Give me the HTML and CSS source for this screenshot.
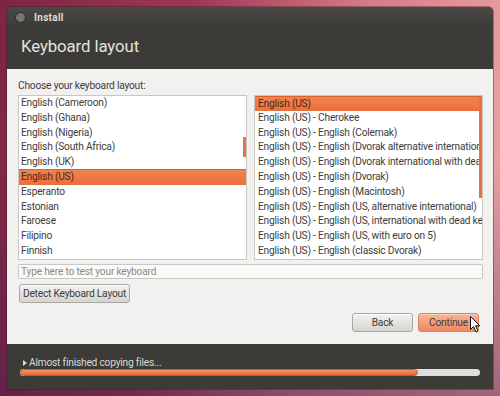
FILE: index.html
```html
<!DOCTYPE HTML>
<html lang="en">
<head>
  <meta charset="UTF-8">
  <title>Install</title>
  <link rel="stylesheet" href="styles.css">
</head>
<body>
  <div class="window">
    <!-- Title bar -->
    <div class="titlebar">
      <span class="close-btn"></span>
      <span class="title">Install</span>
    </div>
    <div class="header">
      <h1>Keyboard layout</h1>
    </div>
    <!-- Page content -->
    <div class="content">
      <p class="label">Choose your keyboard layout:</p>
      <div class="lists">
        <ul class="list list-left">
          <li>English (Cameroon)</li>
          <li>English (Ghana)</li>
          <li>English (Nigeria)</li>
          <li>English (South Africa)</li>
          <li>English (UK)</li>
          <li class="selected">English (US)</li>
          <li>Esperanto</li>
          <li>Estonian</li>
          <li>Faroese</li>
          <li>Filipino</li>
          <li>Finnish</li>
          <span class="scroll-ind left-ind"></span>
        </ul>
        <ul class="list list-right">
          <li class="selected">English (US)</li>
          <li>English (US) - Cherokee</li>
          <li>English (US) - English (Colemak)</li>
          <li>English (US) - English (Dvorak alternative international no dead keys)</li>
          <li>English (US) - English (Dvorak international with dead keys)</li>
          <li>English (US) - English (Dvorak)</li>
          <li>English (US) - English (Macintosh)</li>
          <li>English (US) - English (US, alternative international)</li>
          <li>English (US) - English (US, international with dead keys)</li>
          <li>English (US) - English (US, with euro on 5)</li>
          <li>English (US) - English (classic Dvorak)</li>
          <span class="scroll-ind right-ind"></span>
        </ul>
      </div>
      <input class="test-input" type="text" placeholder="Type here to test your keyboard">
      <button class="btn detect">Detect Keyboard Layout</button>
      <div class="actions">
        <button class="btn">Back</button>
        <button class="btn primary">Continue
          <svg class="cursor" width="11" height="17" viewBox="0 0 11 17">
            <path d="M0.5 0.5 L0.5 13.5 L3.5 10.5 L6 16 L8 15 L5.6 9.8 L9.8 9.8 Z" fill="#fff" stroke="#111" stroke-width="1"/>
          </svg>
        </button>
      </div>
    </div>
    <!-- Progress footer -->
    <div class="footer">
      <div class="status"><span class="arrow"></span>Almost finished copying files...</div>
      <div class="progress"><div class="progress-fill" style="width: 86.5%"></div></div>
    </div>
  </div>
</body>
</html>
```

FILE: styles.css
```css
body {
  margin: 0;
  padding: 0;
  width: 500px;
  height: 396px;
  overflow: hidden;
  font-family: Roboto, 'Noto Sans', sans-serif;
  letter-spacing: -0.2px;
  background: linear-gradient(100deg, #7e2444 0%, #9c3a55 35%, #d67c86 65%, #eeaaa8 100%);
  position: relative;
}
body::after {
  content: "";
  position: absolute;
  inset: 0;
  background: linear-gradient(180deg, rgba(0, 0, 0, 0) 40%, rgba(60, 20, 70, 0.45) 100%);
  pointer-events: none;
}
.window {
  position: relative;
  z-index: 1;
  margin: 7px 0 0 7px;
  width: 486px;
  height: 382px;
  display: flex;
  flex-direction: column;
  background: #3c3b37;
  border-radius: 5px 5px 0 0;
  box-shadow: 0 0 0 1px rgba(40, 20, 30, 0.35);
  overflow: hidden;
}
.titlebar {
  height: 20px;
  display: flex;
  align-items: center;
  padding-left: 8px;
  background: linear-gradient(#4a4945, #3c3b37);
}
.close-btn {
  width: 9px;
  height: 9px;
  border-radius: 50%;
  background: #77766f;
  border: 1px solid #2b2a27;
  margin-right: 8px;
}
.title {
  color: #dfdbd2;
  font-size: 10px;
  font-weight: bold;
  letter-spacing: 0.3px;
}
.header {
  height: 42px;
  padding-left: 14px;
}
.header h1 {
  margin: 0;
  padding-top: 9px;
  font-weight: normal;
  font-size: 16.8px;
  color: #e4e2de;
  letter-spacing: -0.1px;
}
.content {
  height: 275px;
  background: #f2f1f0;
  padding: 10px 10px 0 11px;
  box-sizing: border-box;
  display: flex;
  flex-direction: column;
}
.label {
  margin: 0 0 2px 0;
  font-size: 10.2px;
  line-height: 14px;
  color: #3c3c3c;
}
.lists {
  display: grid;
  grid-template-columns: 229px 229px;
  column-gap: 7px;
  height: 165px;
}
.list {
  position: relative;
  margin: 0;
  padding: 0;
  list-style: none;
  background: #fff;
  border: 1px solid #c9c7c2;
  overflow: hidden;
}
.list li {
  height: 14.8px;
  line-height: 14.8px;
  padding-left: 2px;
  font-size: 10.2px;
  color: #3c3c3c;
  white-space: nowrap;
}
.list-right li {
  padding-left: 3px;
}
.list li.selected {
  background: linear-gradient(#f08452, #e9703c);
  border-top: 1px solid #d8622e;
  margin-top: -1px;
  color: #4a2a1a;
}
.list-right li.selected {
  margin-top: 0;
  height: 13.8px;
  line-height: 13.8px;
}
.scroll-ind {
  position: absolute;
  right: 0;
  width: 3px;
  background: #ec7040;
}
.left-ind {
  top: 41px;
  height: 20px;
}
.right-ind {
  top: 0;
  height: 102px;
}
.test-input {
  margin-top: 4px;
  height: 15px;
  width: 465px;
  box-sizing: border-box;
  border: 1px solid #c9c7c2;
  border-radius: 2px;
  background: #fafaf9;
  padding: 0 2px;
  font-family: inherit;
  font-size: 10.2px;
  letter-spacing: -0.2px;
  color: #3c3c3c;
}
.test-input::placeholder {
  color: #8a8a86;
}
.btn {
  height: 19px;
  padding: 0;
  font-family: inherit;
  font-size: 10.2px;
  letter-spacing: -0.2px;
  color: #3c3c3c;
  white-space: nowrap;
  background: linear-gradient(#f4f3f1, #d6d4d0);
  border: 1px solid #a9a6a0;
  border-radius: 3px;
  box-shadow: inset 0 1px 0 #fff;
}
.detect {
  align-self: flex-start;
  margin-top: 5px;
  margin-left: 1px;
  width: 111px;
}
.actions {
  display: flex;
  justify-content: flex-end;
  gap: 5px;
  margin-top: 10px;
  margin-right: 4px;
}
.actions .btn {
  width: 61px;
}
.btn.primary {
  position: relative;
  background: linear-gradient(#f7b496, #ee8a60);
  border-color: #d9845e;
  box-shadow: inset 0 1px 0 #fbd2c0;
}
.cursor {
  position: absolute;
  left: 51px;
  top: 2px;
}
.footer {
  flex: 1;
  padding: 12px 13px 0 13px;
}
.status {
  display: flex;
  align-items: center;
  font-size: 10.2px;
  line-height: 14px;
  color: #dcdad5;
}
.arrow {
  width: 0;
  height: 0;
  border-top: 3.5px solid transparent;
  border-bottom: 3.5px solid transparent;
  border-left: 4px solid #dcdad5;
  margin: 0 2px 0 3px;
}
.progress {
  margin-top: -1px;
  height: 7px;
  width: 460px;
  background: #e1dfdd;
  border-radius: 4px;
  overflow: hidden;
}
.progress-fill {
  height: 100%;
  background: linear-gradient(#f59468, #e8672f);
  border-radius: 4px;
  border: 1px solid #c5582a;
  box-sizing: border-box;
}
```
